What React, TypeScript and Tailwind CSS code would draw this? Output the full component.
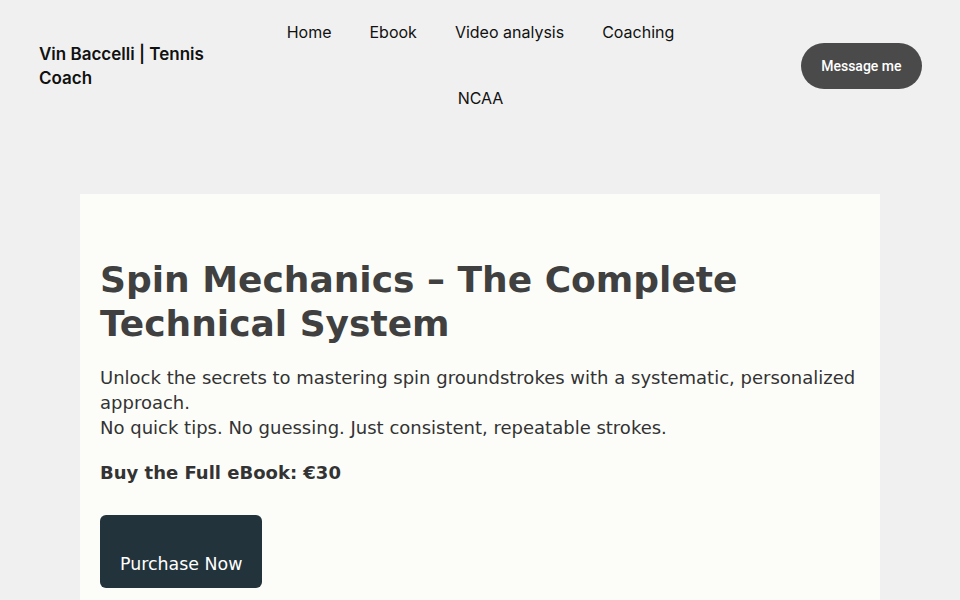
const navLinks = ["Home", "Ebook", "Video analysis", "Coaching", "NCAA"];

const App = () => {
  return (
    <div className="min-h-screen bg-[#f0f0f0]">
      <header className="grid grid-cols-[1fr_auto_1fr] items-center pl-[39px] pr-[38px] font-['Inter',sans-serif]">
        <a href="#" className="w-[200px] text-[17px] font-semibold leading-[24px] text-[#111]">
          Vin Baccelli | Tennis Coach
        </a>
        <nav className="flex w-[432px] flex-wrap justify-center">
          {navLinks.map((link) => (
            <a
              key={link}
              href="#"
              className="px-[19px] pb-[22px] pt-[20px] text-[16px] leading-[24px] text-[#111]"
            >
              {link}
            </a>
          ))}
        </nav>
        <div className="flex justify-end">
          <a
            href="#"
            className="flex h-[46px] items-center rounded-full bg-[#4a4a4a] px-[20.5px] font-['Roboto',sans-serif] text-[14px] font-medium text-white"
          >
            Message me
          </a>
        </div>
      </header>

      <main className="mt-[62px] flex justify-center">
        <section className="w-[800px] bg-[#fcfdf9] px-[20px] pb-[40px] pt-[64px] font-['DejaVu_Sans',sans-serif]">
          <h1 className="text-[36px] font-bold leading-[44px] text-[#404040]">
            Spin Mechanics – The Complete Technical System
          </h1>
          <p className="mt-[19px] text-[18px] leading-[25px] text-[#333]">
            Unlock the secrets to mastering spin groundstrokes with a systematic, personalized approach.
            <br />
            No quick tips. No guessing. Just consistent, repeatable strokes.
          </p>
          <p className="mt-[20px] text-[18px] font-bold leading-[25px] text-[#333]">
            Buy the Full eBook: €30
          </p>
          <a
            href="#"
            className="mt-[30px] inline-block rounded-[6px] bg-[#23333b] px-[20px] pb-[11px] pt-[37px] text-[17.4px] leading-[25px] text-white"
          >
            Purchase Now
          </a>
        </section>
      </main>
    </div>
  );
};

export default App;
